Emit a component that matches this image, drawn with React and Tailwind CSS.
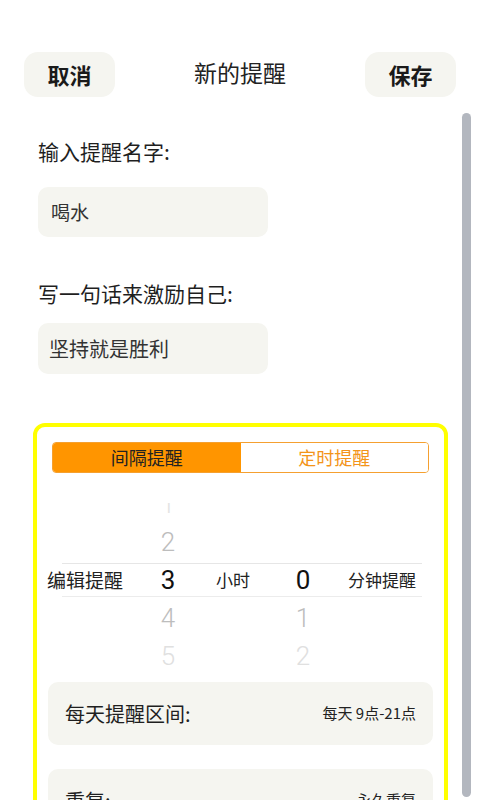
import React from 'react';

const cjk = { fontFamily: '"Noto Sans CJK SC", "Noto Sans", sans-serif' };

const hours = ['1', '2', '3', '4', '5'];
const minutes = ['', '', '0', '1', '2'];
const shades = ['text-[#e4e4e4]', 'text-[#bdbdbd]', 'text-[#111]', 'text-[#bdbdbd]', 'text-[#e0e0e0]'];

function PickerRow({ i }) {
  const mid = i === 2;
  return (
    <div className="flex h-[38px] items-center">
      <div className="w-[100px] pl-[10px] text-[19px] text-[#222]">{mid ? '编辑提醒' : ''}</div>
      <div
        className={`w-[62px] text-center text-[26px] ${shades[i]} ${mid ? 'font-normal' : 'font-light'}`}
        style={{ fontFamily: 'Roboto, "Liberation Sans", sans-serif' }}
      >
        {hours[i]}
      </div>
      <div className="w-[68px] text-center text-[17px] text-[#222]">{mid ? '小时' : ''}</div>
      <div
        className={`w-[72px] text-center text-[26px] ${shades[i]} ${mid ? 'font-normal' : 'font-light'}`}
        style={{ fontFamily: 'Roboto, "Liberation Sans", sans-serif' }}
      >
        {minutes[i]}
      </div>
      <div className="flex-1 pl-[9px] text-[17px] text-[#222]">{mid ? '分钟提醒' : ''}</div>
    </div>
  );
}

export default function App() {
  return (
    <div className="relative w-[480px] h-[800px] overflow-hidden bg-white" style={cjk}>
      {/* header */}
      <div className="flex items-center justify-between px-[24px] pt-[52px]">
        <button className="w-[91px] h-[45px] rounded-[14px] bg-[#f5f5f0] text-[22px] font-semibold text-[#1a1a1a]">
          取消
        </button>
        <h1 className="-mt-[4px] text-[23px] text-[#222]">新的提醒</h1>
        <button className="w-[91px] h-[45px] rounded-[14px] bg-[#f5f5f0] text-[22px] font-semibold text-[#1a1a1a]">
          保存
        </button>
      </div>

      {/* form */}
      <div className="px-[38px]">
        <p className="mt-[40px] text-[21px] leading-[28px] text-[#1f1f1f]">输入提醒名字:</p>
        <div className="mt-[22px] w-[230px] h-[50px] rounded-[10px] bg-[#f5f5f0] flex items-center pl-[13px] text-[19px] text-[#333]">
          喝水
        </div>

        <p className="mt-[42px] text-[21px] leading-[28px] text-[#1f1f1f]">写一句话来激励自己:</p>
        <div className="mt-[16px] w-[230px] h-[51px] rounded-[10px] bg-[#f5f5f0] flex items-center pl-[11px] text-[20px] text-[#333]">
          坚持就是胜利
        </div>
      </div>

      {/* yellow card */}
      <div className="mt-[49px] ml-[33px] w-[415px] rounded-[12px] border-[4px] border-[#ffff00] pb-[40px]">
        <div className="mx-[15px] mt-[15px] flex h-[31px] rounded-[4px] border border-[#f5a030] overflow-hidden text-[18px]">
          <div className="flex-1 flex items-center justify-center bg-[#ff9500] text-[#222]">间隔提醒</div>
          <div className="flex-1 flex items-center justify-center bg-white text-[#f39419]">定时提醒</div>
        </div>

        <div className="relative mt-[30px] h-[170px] overflow-hidden">
          <div className="-mt-[18px]">
            {[0, 1, 2, 3, 4].map((i) => (
              <PickerRow key={i} i={i} />
            ))}
          </div>
          <div className="absolute left-[25px] right-[22px] top-[60px] h-px bg-[#e6e6e6]" />
          <div className="absolute left-[25px] right-[22px] top-[93px] h-px bg-[#ececec]" />
        </div>

        <div className="mx-[11px] mt-[9px] flex h-[63px] items-center justify-between rounded-[10px] bg-[#f5f5f0] pl-[17px] pr-[17px]">
          <span className="text-[20px] text-[#1f1f1f]">每天提醒区间:</span>
          <span className="text-[15px] text-[#222]">每天 9点-21点</span>
        </div>

        <div className="mx-[11px] mt-[24px] flex h-[63px] items-center justify-between rounded-[10px] bg-[#f5f5f0] pl-[17px] pr-[17px]">
          <span className="text-[20px] text-[#1f1f1f]">重复:</span>
          <span className="text-[15px] text-[#222]">永久重复</span>
        </div>
      </div>

      {/* scrollbar */}
      <div className="absolute left-[462px] top-[113px] w-[9px] h-[684px] rounded-full bg-[#b3b7bf]" />
    </div>
  );
}
